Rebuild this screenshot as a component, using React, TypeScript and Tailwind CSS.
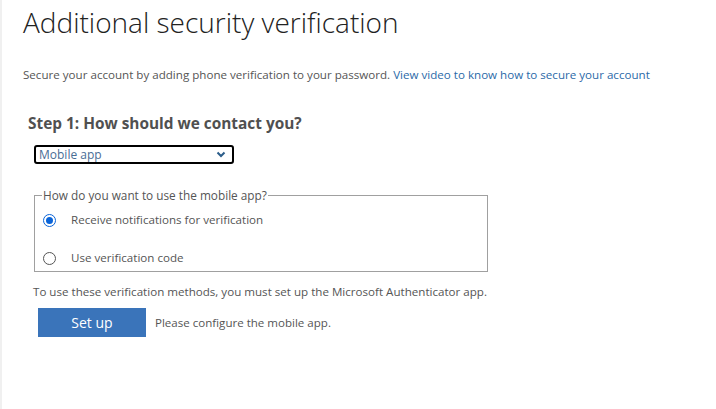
export default function App() {
  return (
    <div className="min-h-[409px] w-full bg-white flex font-['Open_Sans',sans-serif]">
      <div className="w-[2px] shrink-0 bg-[#f0f0f0]" />
      <div className="flex-1 pl-[21px] pt-[3px]">
        <h1 className="text-[28px] leading-[38px] font-light text-[#222]">Additional security verification</h1>

        <p className="mt-[26px] text-[11.6px] leading-[16px] text-[#555]">
          Secure your account by adding phone verification to your password.{" "}
          <a className="text-[#2b6aa8]" href="#">View video to know how to secure your account</a>
        </p>

        <h2 className="mt-[31px] ml-[5px] text-[15.4px] leading-[20px] font-bold text-[#505050]">
          Step 1: How should we contact you?
        </h2>

        <div className="mt-[11px] ml-[11px] w-[200px] h-[19px] border-2 border-black rounded-[3px] flex items-center justify-between pl-[3px] pr-[6px]">
          <span className="text-[12px] leading-[14px] text-[#4a6d95]">Mobile app</span>
          <svg width="10" height="7" viewBox="0 0 10 7">
            <path d="M1.5 1.5 L5 5 L8.5 1.5" fill="none" stroke="#2b5d8a" strokeWidth="2" />
          </svg>
        </div>

        <fieldset className="mt-[24px] ml-[11px] w-[454px] h-[84px] border border-[#a0a0a0] pl-[8px] pr-3 pt-0 pb-0">
          <legend className="px-[1px] -ml-[1px] text-[11.8px] leading-[14px] text-[#555]">How do you want to use the mobile app?</legend>
          <div className="flex flex-col gap-[22px] mt-[10px]">
            <label className="flex items-center gap-[15px] text-[11.6px] leading-[16px] text-[#555]">
              <span className="w-[13px] h-[13px] rounded-full border border-[#0a64d8] flex items-center justify-center">
                <span className="w-[7px] h-[7px] rounded-full bg-[#0a64d8]" />
              </span>
              Receive notifications for verification
            </label>
            <label className="flex items-center gap-[15px] text-[11.6px] leading-[16px] text-[#555]">
              <span className="w-[13px] h-[13px] rounded-full border border-[#555]" />
              Use verification code
            </label>
          </div>
        </fieldset>

        <p className="mt-[12px] ml-[10px] text-[11.6px] leading-[16px] text-[#555]">
          To use these verification methods, you must set up the Microsoft Authenticator app.
        </p>

        <div className="mt-[8px] ml-[15px] flex items-center gap-[9px]">
          <button className="w-[108px] h-[29px] bg-[#3a74ba] text-white text-[14px]">Set up</button>
          <span className="text-[11.55px] text-[#555]">Please configure the mobile app.</span>
        </div>
      </div>
    </div>
  );
}
